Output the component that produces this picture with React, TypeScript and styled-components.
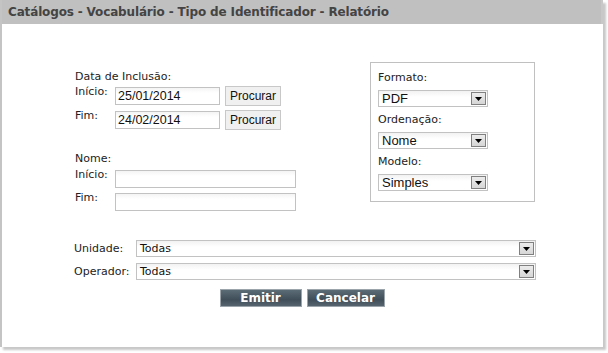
import React from 'react'
import styled, { createGlobalStyle } from 'styled-components'

const GlobalStyle = createGlobalStyle`
	html, body {
		margin: 0;
		padding: 0;
		background: #ffffff;
	}
	body {
		font-family: "DejaVu Sans", Verdana, sans-serif;
		font-size: 11px;
		color: #222;
	}
`

const Frame = styled.div`
	width: 608px;
	height: 353px;
	background: #ffffff;
`

const Panel = styled.div`
	width: 601px;
	height: 347px;
	background: #ffffff;
	border-left: 2px solid #c4c4c4;
	box-shadow: 3px 3px 2px #c8c8c8;
	display: flex;
	flex-direction: column;
`

const Header = styled.div`
	height: 24px;
	line-height: 25px;
	background: #c0c0c0;
	padding-left: 6px;
	font-weight: bold;
	font-size: 12px;
	letter-spacing: -0.15px;
	color: #444444;
	border-right: 2px solid #c8c8c8;
`

const Body = styled.div`
	flex: 1;
	padding: 38px 0 0 73px;
`

const TopSection = styled.div`
	display: flex;
	align-items: flex-start;
`

const LeftColumn = styled.div`
	width: 295px;
	padding-top: 8px;
	display: flex;
	flex-direction: column;
`

const GroupTitle = styled.div<{ $top?: number }>`
	height: 13px;
	line-height: 13px;
	margin-top: ${(p) => p.$top ?? 0}px;
	margin-bottom: ${(p) => (p.$top ? 4 : 3)}px;
`

const Row = styled.div<{ $gap?: number }>`
	display: flex;
	align-items: center;
	height: 20px;
	margin-bottom: ${(p) => p.$gap ?? 0}px;
`

const RowLabel = styled.div<{ $width: number }>`
	width: ${(p) => p.$width}px;
	box-sizing: border-box;
	align-self: flex-start;
	line-height: 12px;
`

const TextInput = styled.div<{ $width: number }>`
	width: ${(p) => p.$width}px;
	height: 18px;
	box-sizing: border-box;
	border: 1px solid #c2c2c2;
	background: linear-gradient(#f4f4f4, #ffffff 5px);
	font-family: "Liberation Sans", Arial, sans-serif;
	font-size: 12.5px;
	line-height: 16px;
	padding-left: 2px;
	color: #111;
`

const SmallButton = styled.div`
	margin-left: 5px;
	height: 20px;
	padding: 0 4px;
	box-sizing: border-box;
	border: 1px solid #c8c8c8;
	background: #f0f0f0;
	font-family: "Liberation Sans", Arial, sans-serif;
	font-size: 12px;
	line-height: 18px;
	color: #111;
`

const Fieldset = styled.div`
	width: 165px;
	height: 140px;
	box-sizing: border-box;
	border: 1px solid #c0c0c0;
	padding: 8px 0 0 7px;
	display: flex;
	flex-direction: column;
`

const FieldLabel = styled.div`
	height: 13px;
	line-height: 13px;
	margin-bottom: 6px;
`

const SelectBox = styled.div<{ $width: number; $sans?: boolean; $mb: number }>`
	width: ${(p) => p.$width}px;
	height: 17px;
	box-sizing: border-box;
	border: 1px solid #c2c2c2;
	background: linear-gradient(#f2f2f2, #ffffff 6px);
	display: flex;
	align-items: center;
	margin-bottom: ${(p) => p.$mb}px;
	font-family: ${(p) => (p.$sans ? '"DejaVu Sans", Verdana, sans-serif' : '"Liberation Sans", Arial, sans-serif')};
	font-size: ${(p) => (p.$sans ? 11 : 13)}px;
	color: #111;
`

const SelectText = styled.span`
	flex: 1;
	padding-left: 3px;
	line-height: 15px;
`

const ArrowBox = styled.div`
	width: 15px;
	height: 13px;
	margin-right: 1px;
	box-sizing: border-box;
	border: 1px solid #808080;
	background: linear-gradient(#ececec, #d6d6d6);
	display: flex;
	align-items: center;
	justify-content: center;
`

const Arrow = () => (
	<svg width="7" height="4" viewBox="0 0 7 4">
		<path d="M0 0 H7 L3.5 4 Z" fill="#000" />
	</svg>
)

const BottomSection = styled.div`
	margin-top: 28px;
	margin-left: -1px;
	display: flex;
	flex-direction: column;
`

const WideRow = styled.div`
	display: flex;
	align-items: center;
	height: 17px;
	margin-bottom: 6px;
`

const WideLabel = styled.div`
	width: 62px;
	line-height: 15px;
`

const Actions = styled.div`
	display: flex;
	justify-content: center;
	gap: 5px;
	margin-left: -73px;
	margin-top: 3px;
`

const ActionButton = styled.div<{ $width: number }>`
	width: ${(p) => p.$width}px;
	height: 18px;
	box-sizing: border-box;
	border: 1px solid #9aa4aa;
	background: linear-gradient(#5c6c76, #3f4e58 60%, #55646e);
	color: #ffffff;
	font-weight: bold;
	font-size: 12px;
	line-height: 16px;
	text-align: center;
`

const Select = ({ width, value, sans, mb = 0 }: { width: number; value: string; sans?: boolean; mb?: number }) => (
	<SelectBox $width={width} $sans={sans} $mb={mb}>
		<SelectText>{value}</SelectText>
		<ArrowBox>
			<Arrow />
		</ArrowBox>
	</SelectBox>
)

const App = () => {
	return (
		<Frame>
			<GlobalStyle />
			<Panel>
				<Header>Catálogos - Vocabulário - Tipo de Identificador - Relatório</Header>
				<Body>
					<TopSection>
						<LeftColumn>
							<GroupTitle>Data de Inclusão:</GroupTitle>
							<Row $gap={4}>
								<RowLabel $width={40}>Início:</RowLabel>
								<TextInput $width={105}>25/01/2014</TextInput>
								<SmallButton>Procurar</SmallButton>
							</Row>
							<Row $gap={4}>
								<RowLabel $width={40}>Fim:</RowLabel>
								<TextInput $width={105}>24/02/2014</TextInput>
								<SmallButton>Procurar</SmallButton>
							</Row>
							<GroupTitle $top={18}>Nome:</GroupTitle>
							<Row $gap={3}>
								<RowLabel $width={40}>Início:</RowLabel>
								<TextInput $width={181} />
							</Row>
							<Row>
								<RowLabel $width={40}>Fim:</RowLabel>
								<TextInput $width={181} />
							</Row>
						</LeftColumn>
						<Fieldset>
							<FieldLabel>Formato:</FieldLabel>
							<Select width={110} value="PDF" mb={6} />
							<FieldLabel>Ordenação:</FieldLabel>
							<Select width={110} value="Nome" mb={6} />
							<FieldLabel>Modelo:</FieldLabel>
							<Select width={110} value="Simples" />
						</Fieldset>
					</TopSection>
					<BottomSection>
						<WideRow>
							<WideLabel>Unidade:</WideLabel>
							<Select width={400} value="Todas" sans />
						</WideRow>
						<WideRow>
							<WideLabel>Operador:</WideLabel>
							<Select width={400} value="Todas" sans />
						</WideRow>
						<Actions>
							<ActionButton $width={82}>Emitir</ActionButton>
							<ActionButton $width={78}>Cancelar</ActionButton>
						</Actions>
					</BottomSection>
				</Body>
			</Panel>
		</Frame>
	)
}

export default App
